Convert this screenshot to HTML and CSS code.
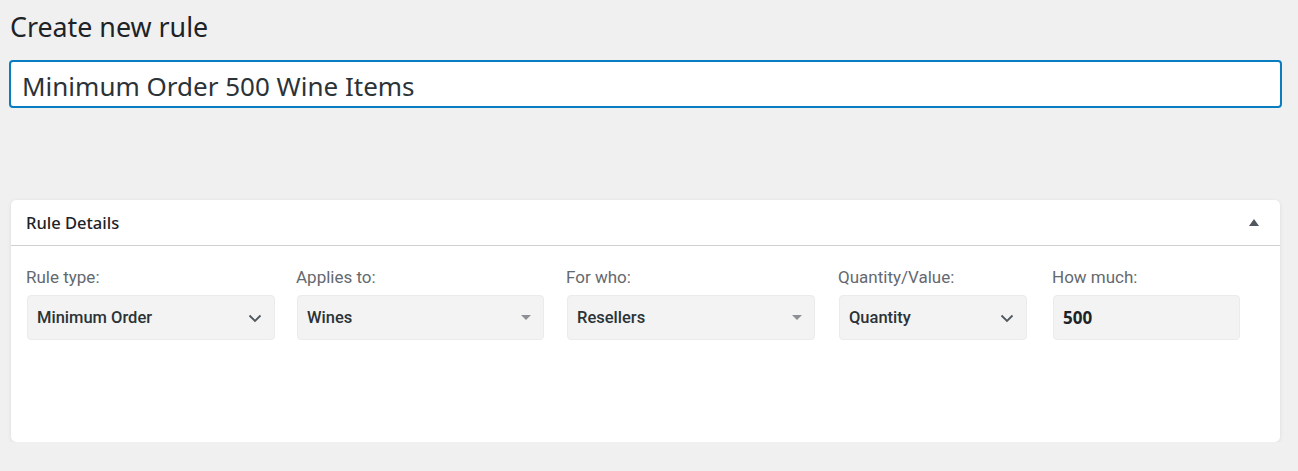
FILE: index.html
```html
<!DOCTYPE html>
<html>
<head>
<meta charset="utf-8">
<link rel="stylesheet" href="styles.css">
</head>
<body>
<div class="page">
  <h1 class="title">Create new rule</h1>
  <input class="rule-name" type="text" value="Minimum Order 500 Wine Items">
  <div class="card">
    <div class="card-header">
      <span class="card-title">Rule Details</span>
      <span class="toggle"></span>
    </div>
    <div class="card-body">
      <div class="fields">
        <div class="field">
          <div class="label">Rule type:</div>
          <div class="select w248"><span>Minimum Order</span>
            <svg class="chev" width="14" height="9" viewBox="0 0 14 9"><path d="M1.5 1.5 L7 7 L12.5 1.5" fill="none" stroke="#50575e" stroke-width="1.8"/></svg>
          </div>
        </div>
        <div class="field">
          <div class="label">Applies to:</div>
          <div class="select w247"><span>Wines</span><span class="tri"></span></div>
        </div>
        <div class="field">
          <div class="label">For who:</div>
          <div class="select w248"><span>Resellers</span><span class="tri"></span></div>
        </div>
        <div class="field">
          <div class="label">Quantity/Value:</div>
          <div class="select w188"><span>Quantity</span>
            <svg class="chev" width="14" height="9" viewBox="0 0 14 9"><path d="M1.5 1.5 L7 7 L12.5 1.5" fill="none" stroke="#50575e" stroke-width="1.8"/></svg>
          </div>
        </div>
        <div class="field">
          <div class="label">How much:</div>
          <div class="select w187 number"><span>500</span></div>
        </div>
      </div>
    </div>
  </div>
</div>
</body>
</html>
```
FILE: styles.css
```css
html, body {
  margin: 0;
  padding: 0;
  background: #f0f0f1;
}
.page {
  padding: 0 16px 0 9px;
  font-family: "Noto Sans", "Open Sans", sans-serif;
}
.title {
  margin: 0;
  padding: 8px 0 0 1px;
  font-size: 26.8px;
  font-weight: 400;
  line-height: 37px;
  color: #1d2327;
}
.rule-name {
  display: block;
  box-sizing: border-box;
  width: 1273px;
  height: 48px;
  margin: 15px 0 0 0;
  padding: 4px 11px 0 11px;
  border: 2px solid #0a7cc0;
  border-radius: 4px;
  background: #fff;
  font-family: "Noto Sans", "Open Sans", sans-serif;
  font-size: 26px;
  color: #2c3338;
  outline: none;
}
.card {
  margin: 92px 0 0 2px;
  width: 1269px;
  height: 242px;
  box-sizing: border-box;
  background: #fff;
  border-radius: 5px;
  box-shadow: 0 1px 4px rgba(0,0,0,0.08), 0 0 1px rgba(0,0,0,0.06);
}
.card-header {
  height: 45px;
  border-bottom: 1px solid #d0d0d0;
  display: flex;
  align-items: center;
  justify-content: space-between;
  padding: 0 21px 0 15px;
}
.card-title {
  font-size: 16.5px;
  font-weight: 500;
  color: #1d2327;
}
.toggle {
  width: 0;
  height: 0;
  border-left: 5px solid transparent;
  border-right: 5px solid transparent;
  border-bottom: 7px solid #50575e;
}
.card-body {
  padding: 20px 16px 0 15px;
  font-family: Roboto, "Liberation Sans", sans-serif;
}
.fields {
  display: grid;
  grid-template-columns: 270px 270px 272px 214px 190px;
}
.label {
  font-size: 17px;
  color: #646970;
  line-height: 22px;
  margin-bottom: 7px;
}
.select {
  box-sizing: border-box;
  height: 45px;
  margin-left: 1px;
  background: #f3f3f3;
  border: 1px solid #ebebeb;
  border-radius: 4px;
  display: flex;
  align-items: center;
  justify-content: space-between;
  padding: 0 12px 0 9px;
  font-size: 16.5px;
  font-weight: 500;
  color: #2c3338;
}
.w248 { width: 248px; }
.w247 { width: 247px; }
.w188 { width: 188px; }
.w187 { width: 187px; }
.chev { margin-top: 1px; }
.tri {
  width: 0;
  height: 0;
  border-left: 5px solid transparent;
  border-right: 5px solid transparent;
  border-top: 5px solid #8c8f94;
}
.number {
  font-family: "Noto Sans", "Open Sans", sans-serif;
  font-size: 17px;
  font-weight: 700;
  color: #1d2327;
}
```
